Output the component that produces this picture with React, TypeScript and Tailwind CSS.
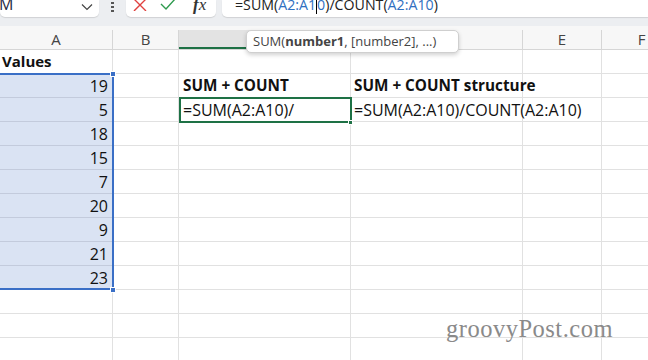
import React from "react";

const COLS = [
  { name: "A", w: 113 },
  { name: "B", w: 66 },
  { name: "C", w: 172 },
  { name: "D", w: 172 },
  { name: "E", w: 79 },
  { name: "F", w: 80 },
];

const values = [19, 5, 18, 15, 7, 20, 9, 21, 23];

export default function App() {
  const rows: React.ReactNode[] = [];
  for (let r = 1; r <= 13; r++) {
    rows.push(
      <div key={r} className="flex h-[24px]">
        {COLS.map((c, ci) => {
          const sel = ci === 0 && r >= 2 && r <= 10;
          let content: React.ReactNode = null;
          let cls = "text-[16px]";
          if (ci === 0 && r === 1) {
            content = "Values";
            cls = "text-[15px] font-bold pl-[2px]";
          } else if (ci === 0 && r >= 2 && r <= 10) {
            content = values[r - 2];
            cls = "text-[16px] justify-end pr-[4px]";
          } else if (ci === 2 && r === 2) {
            content = "SUM + COUNT";
            cls = "text-[15.3px] font-bold pl-[4px]";
          } else if (ci === 2 && r === 3) {
            content = "=SUM(A2:A10)/";
            cls = "text-[16px] pl-[4px]";
          } else if (ci === 3 && r === 2) {
            content = "SUM + COUNT structure";
            cls = "text-[15.3px] font-bold pl-[3px]";
          } else if (ci === 3 && r === 3) {
            content = "=SUM(A2:A10)/COUNT(A2:A10)";
            cls = "text-[16px] pl-[3px]";
          }
          return (
            <div
              key={c.name}
              style={{ width: c.w }}
              className={`shrink-0 flex items-center whitespace-nowrap overflow-visible border-b border-r text-[#111] ${
                sel ? "bg-[#dae3f3] border-[#c3cbdc]" : "border-[#e1e1e1]"
              } ${cls}`}
            >
              <span className="relative z-10">{content}</span>
            </div>
          );
        })}
      </div>
    );
  }

  return (
    <div
      className="relative w-[648px] h-[360px] overflow-hidden bg-white"
      style={{ fontFamily: '"Open Sans", "Noto Sans", sans-serif' }}
    >
      {/* Top formula bar */}
      <div className="flex h-[26px] bg-[#eceef1] items-start">
        <div className="w-[99px] h-[17px] bg-white rounded-b-[5px] shadow-[0_1px_1px_rgba(0,0,0,0.12)] flex items-end justify-between pr-[6px] overflow-hidden">
          <span className="text-[16px] leading-none text-[#1f2a44] mb-[5px] -ml-[1px]">M</span>
          <svg width="12" height="8" viewBox="0 0 12 8" className="mb-[6px]">
            <path d="M1 1.5 L6 6.5 L11 1.5" fill="none" stroke="#444" strokeWidth="1.2" />
          </svg>
        </div>
        <div className="w-[27px] flex flex-col items-center pt-[2px] gap-[2px]">
          <div className="w-[3px] h-[2px] bg-[#555]" />
          <div className="w-[3px] h-[2px] bg-[#555]" />
          <div className="w-[3px] h-[2px] bg-[#555]" />
        </div>
        <div className="w-[90px] h-[17px] bg-white rounded-b-[5px] shadow-[0_1px_1px_rgba(0,0,0,0.12)] flex items-start pl-[7px] overflow-hidden">
          <svg width="15" height="12" viewBox="0 0 15 12" className="mt-[-1px]">
            <path d="M1 0 L13 12 M13 0 L1 12" stroke="#e0413f" strokeWidth="1.4" fill="none" />
          </svg>
          <svg width="16" height="12" viewBox="0 0 16 12" className="ml-[12px] mt-[-1px]">
            <path d="M1 5 L6 10 L15 0" stroke="#2e9a4e" strokeWidth="1.4" fill="none" />
          </svg>
          <span
            className="ml-[17px] text-[17px] leading-none italic text-[#333] -mt-[4px]"
            style={{ fontFamily: '"Liberation Serif", serif' }}
          >
            <span className="font-bold">f</span>x
          </span>
        </div>
        <div className="ml-[6px] flex-1 h-[17px] bg-white rounded-bl-[5px] shadow-[0_1px_1px_rgba(0,0,0,0.12)] overflow-hidden flex items-end pl-[13px]">
          <span className="text-[14.2px] leading-none mb-[5px] whitespace-nowrap text-[#222]">
            =SUM(<span className="text-[#2f6fc0]">A2:A1</span>
            <span className="inline-block w-[1px] h-[15px] bg-black align-bottom -mb-[2px]" />
            <span className="text-[#2f6fc0]">0</span>)/COUNT(<span className="text-[#2f6fc0]">A2:A10</span>)
          </span>
        </div>
      </div>
      <div className="h-[4px] bg-[#f7f7f7]" />

      {/* Column headers */}
      <div className="flex h-[20px] bg-[#f7f7f7] border-b border-[#d6d6d6]">
        {COLS.map((c, ci) => (
          <div
            key={c.name}
            style={{ width: c.w }}
            className={`shrink-0 flex items-center justify-center text-[15px] text-[#444] border-r border-[#d6d6d6] ${
              ci === 2 ? "bg-[#e3e3e3] border-b-2 border-b-[#1e7145]" : ""
            }`}
          >
            {c.name}
          </div>
        ))}
      </div>

      {/* Grid */}
      <div className="relative">
        {rows}

        {/* A2:A10 selection border */}
        <div className="absolute left-[-2px] top-[23px] w-[116px] h-[217px] border-2 border-[#3a6fc6] pointer-events-none" />
        <div className="absolute left-[110px] top-[21px] w-[6px] h-[6px] bg-[#3a6fc6] border border-white" />
        <div className="absolute left-[110px] top-[237px] w-[6px] h-[6px] bg-[#3a6fc6] border border-white" />

        {/* Active cell C3 */}
        <div className="absolute left-[179px] top-[47px] w-[173px] h-[26px] border-2 border-[#1e7145] pointer-events-none" />
        <div className="absolute left-[348px] top-[70px] w-[5px] h-[5px] bg-[#1e7145] border border-white" />

        {/* Watermark */}
        <div
          className="absolute left-[446px] top-[261px] text-[24.5px] text-[#8a8a8a] tracking-[0.5px]"
          style={{ fontFamily: '"Liberation Serif", serif' }}
        >
          groovyPost.com
        </div>
      </div>

      {/* Tooltip */}
      <div className="absolute left-[246px] top-[30px] w-[213px] h-[23px] bg-white border border-[#cfcfcf] rounded-[5px] shadow-[0_2px_4px_rgba(0,0,0,0.18)] flex items-center pl-[6px] text-[13px] text-[#444] whitespace-nowrap">
        SUM(<span className="font-bold">number1</span>, [number2], ...)
      </div>
    </div>
  );
}
